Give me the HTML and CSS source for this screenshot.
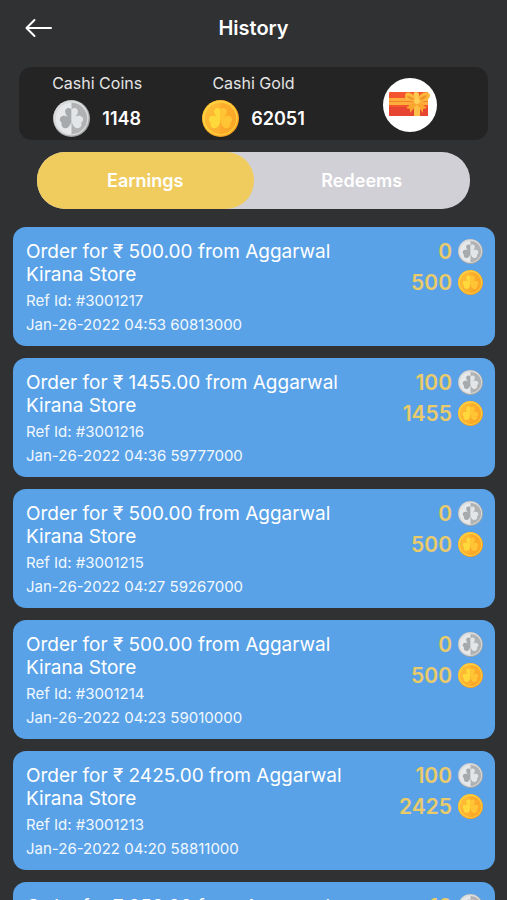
FILE: index.html
```html
<!DOCTYPE html>
<html lang="en">
<head>
<meta charset="utf-8">
<meta name="viewport" content="width=device-width, initial-scale=1">
<title>History</title>
<link rel="stylesheet" href="styles.css">
</head>
<body>
<svg class="defs" aria-hidden="true">
  <defs>
    <linearGradient id="gold-face" x1="0" y1="0" x2="1" y2="1">
      <stop offset="0" stop-color="#ffbf38"/><stop offset="1" stop-color="#fba82a"/>
    </linearGradient>
    <clipPath id="left-half"><rect x="0" y="0" width="20" height="40"/></clipPath>
    <clipPath id="right-half"><rect x="20" y="0" width="20" height="40"/></clipPath>
    <g id="clover">
      <path d="M20 22C15 18 12 14 13.500 10.500 15 8 18.500 8 20 10.500 21.500 8 25 8 26.500 10.500 28 14 25 18 20 22z"/>
      <path d="M20 20C15 17 11 16 8.500 18.500 6.500 21 7.500 23.500 9.500 24.500 8.500 27 10 30 13 30.500 17 31 20 26 20 20z"/>
      <path d="M20 20C25 17 29 16 31.500 18.500 33.500 21 32.500 23.500 30.500 24.500 31.500 27 30 30 27 30.500 23 31 20 26 20 20z"/>
    </g>
    <symbol id="coin-silver" viewBox="0 0 40 40">
      <circle cx="20" cy="20" r="20" fill="#a4a6a7"/>
      <circle cx="19.500" cy="19.500" r="19" fill="#d9dbdc"/>
      <circle cx="20" cy="20" r="17" fill="#e6e8ea"/>
      <path d="M20 3a17 17 0 0 1 0 34z" fill="#b0b2b3"/>
      <use href="#clover" fill="#a6aaac" clip-path="url(#left-half)"/>
      <use href="#clover" fill="#e3e6e8" clip-path="url(#right-half)"/>
    </symbol>
    <symbol id="coin-gold" viewBox="0 0 40 40">
      <circle cx="20" cy="20" r="20" fill="#f7a020"/>
      <circle cx="19.500" cy="19.500" r="19" fill="#ffd03e"/>
      <circle cx="20" cy="20" r="17" fill="url(#gold-face)"/>
      <path d="M20 3a17 17 0 0 1 0 34z" fill="#fba224" opacity=".5"/>
      <use href="#clover" fill="#ffd93c" clip-path="url(#left-half)"/>
      <use href="#clover" fill="#ffc534" clip-path="url(#right-half)"/>
    </symbol>
  </defs>
</svg>

<header class="topbar">
  <button class="back" type="button" aria-label="Back">
    <svg viewBox="0 0 28 20" aria-hidden="true"><path d="M26 10H2M9.500 2 1.500 10l8 8"/></svg>
  </button>
  <h1>History</h1>
</header>

<section class="balances">
  <div class="balance">
    <span class="balance-name">Cashi Coins</span>
    <div class="balance-value"><svg class="coin-lg" aria-hidden="true"><use href="#coin-silver"/></svg><span>1148</span></div>
  </div>
  <div class="balance">
    <span class="balance-name">Cashi Gold</span>
    <div class="balance-value"><svg class="coin-lg" aria-hidden="true"><use href="#coin-gold"/></svg><span>62051</span></div>
  </div>
  <button class="gift" type="button" aria-label="Gift cards">
    <svg viewBox="0 0 54 54" aria-hidden="true">
      <rect x="6" y="14" width="39" height="24" rx="1" fill="#f4552f"/>
      <path d="M6 29h39v8a1 1 0 0 1-1 1H7a1 1 0 0 1-1-1z" fill="#e84432"/>
      <path d="M6 20h39v7H6z" fill="#ffae3c"/>
      <path d="M6 23h39v1H6z" fill="#f0832c"/>
      <path d="M31 25h6v13h-6z" fill="#ffc049"/>
      <path d="M33 22 23 30l4 1 0 4 9-11z" fill="#faa52e"/>
      <path d="M34 22l10 8-4 1 0 4-8-11z" fill="#faa52e"/>
      <path d="M33 24c-4-1-11-1-11-6 0-6 8-4 12 4z" fill="#fdb73b"/>
      <path d="M34 23c2-9 12-11 13-6 0 5-6 7-12 7z" fill="#fdb73b"/>
      <path d="M32 22c-3-3-5-4-8-4 1 3 4 4 8 4zM36 22c2-3 4-4 8-5-1 4-4 5-8 5z" fill="#f09229"/>
      <path d="M34 22c-5-5-4-8-1-8s5 3 1 8z" fill="#ffca50"/>
      <circle cx="34" cy="23" r="3" fill="#ffd058"/>
    </svg>
  </button>
</section>

<div class="tabs" role="tablist">
  <button class="tab active" type="button" role="tab" aria-selected="true">Earnings</button>
  <button class="tab" type="button" role="tab" aria-selected="false">Redeems</button>
</div>

<main class="list">
  <article class="card">
    <div class="details"><h2>Order for ₹ 500.00 from Aggarwal Kirana Store</h2><p>Ref Id: #3001217</p><p>Jan-26-2022 04:53 60813000</p></div>
    <div class="amounts">
      <div class="amount"><span>0</span><svg aria-hidden="true"><use href="#coin-silver"/></svg></div>
      <div class="amount"><span>500</span><svg aria-hidden="true"><use href="#coin-gold"/></svg></div>
    </div>
  </article>
  <article class="card">
    <div class="details"><h2>Order for ₹ 1455.00 from Aggarwal Kirana Store</h2><p>Ref Id: #3001216</p><p>Jan-26-2022 04:36 59777000</p></div>
    <div class="amounts">
      <div class="amount"><span>100</span><svg aria-hidden="true"><use href="#coin-silver"/></svg></div>
      <div class="amount"><span>1455</span><svg aria-hidden="true"><use href="#coin-gold"/></svg></div>
    </div>
  </article>
  <article class="card">
    <div class="details"><h2>Order for ₹ 500.00 from Aggarwal Kirana Store</h2><p>Ref Id: #3001215</p><p>Jan-26-2022 04:27 59267000</p></div>
    <div class="amounts">
      <div class="amount"><span>0</span><svg aria-hidden="true"><use href="#coin-silver"/></svg></div>
      <div class="amount"><span>500</span><svg aria-hidden="true"><use href="#coin-gold"/></svg></div>
    </div>
  </article>
  <article class="card">
    <div class="details"><h2>Order for ₹ 500.00 from Aggarwal Kirana Store</h2><p>Ref Id: #3001214</p><p>Jan-26-2022 04:23 59010000</p></div>
    <div class="amounts">
      <div class="amount"><span>0</span><svg aria-hidden="true"><use href="#coin-silver"/></svg></div>
      <div class="amount"><span>500</span><svg aria-hidden="true"><use href="#coin-gold"/></svg></div>
    </div>
  </article>
  <article class="card">
    <div class="details"><h2>Order for ₹ 2425.00 from Aggarwal Kirana Store</h2><p>Ref Id: #3001213</p><p>Jan-26-2022 04:20 58811000</p></div>
    <div class="amounts">
      <div class="amount"><span>100</span><svg aria-hidden="true"><use href="#coin-silver"/></svg></div>
      <div class="amount"><span>2425</span><svg aria-hidden="true"><use href="#coin-gold"/></svg></div>
    </div>
  </article>
  <article class="card">
    <div class="details"><h2>Order for ₹ 250.00 from Aggarwal</h2></div>
    <div class="amounts">
      <div class="amount"><span>10</span><svg aria-hidden="true"><use href="#coin-silver"/></svg></div>
    </div>
  </article>
</main>
</body>
</html>
```
FILE: styles.css
```css
* { box-sizing: border-box; }

body {
  margin: 0;
  height: 100vh;
  display: flex;
  flex-direction: column;
  overflow: hidden;
  background: #303133;
  color: #fff;
  font-family: Inter, "Noto Sans", sans-serif;
}

h1, h2, p { margin: 0; }

button {
  border: 0;
  padding: 0;
  background: none;
  color: inherit;
  font: inherit;
}

svg { display: block; flex: none; }
.defs { width: 0; height: 0; }

.topbar {
  display: grid;
  grid-template-columns: 28px 1fr 28px;
  align-items: center;
  padding: 13px 25px 24px;
}

.topbar h1 {
  font-size: 20px;
  line-height: 30px;
  font-weight: 600;
  text-align: center;
}

.back svg {
  width: 28px;
  height: 20px;
  fill: none;
  stroke: #fff;
  stroke-width: 2;
  stroke-linecap: round;
  stroke-linejoin: round;
}

.balances {
  display: grid;
  grid-template-columns: repeat(3, 1fr);
  align-items: center;
  justify-items: center;
  margin: 0 19px;
  padding: 5px 0 3px;
  border-radius: 13px;
  background: #242424;
}

.balance {
  display: flex;
  flex-direction: column;
  align-items: center;
}

.balance-name {
  font-size: 16px;
  line-height: 22px;
  color: #e4e4e4;
}

.balance-value {
  display: flex;
  align-items: center;
  gap: 12px;
  padding: 6px 0 0;
  font-size: 18px;
  line-height: 24px;
  font-weight: 600;
}

.coin-lg { width: 37px; height: 37px; }

.gift {
  width: 54px;
  height: 54px;
  border-radius: 50%;
  background: #fff;
}

.tabs {
  display: flex;
  margin: 12px 37px 18px;
  border-radius: 28px;
  background: #d1d0d6;
}

.tab {
  flex: 1;
  height: 57px;
  border-radius: 28px;
  font-size: 18px;
  font-weight: 600;
}

.tab.active { background: #f0cc5f; }

.list {
  flex: 1;
  min-height: 0;
  overflow-y: auto;
  scrollbar-width: none;
  display: flex;
  flex-direction: column;
  gap: 12px;
  padding: 0 12px 0 13px;
}

.card {
  flex: none;
  display: flex;
  justify-content: space-between;
  padding: 12px 12px 9px 13px;
  border-radius: 13px;
  background: #59a2e8;
}

.details { flex: 1; max-width: 330px; padding-top: 1px; }

.card h2 {
  margin-bottom: 3px;
  font-size: 19px;
  line-height: 23px;
  font-weight: 400;
}

.card p {
  font-size: 15px;
  line-height: 24px;
  color: #f2f8fe;
}

.amounts {
  display: flex;
  flex-direction: column;
  gap: 6px;
}

.amount {
  display: flex;
  align-items: center;
  justify-content: flex-end;
  gap: 6px;
  color: #e9cb6b;
  font-size: 21px;
  line-height: 25px;
  font-weight: 600;
}

.amount svg { width: 25px; height: 25px; }
```
